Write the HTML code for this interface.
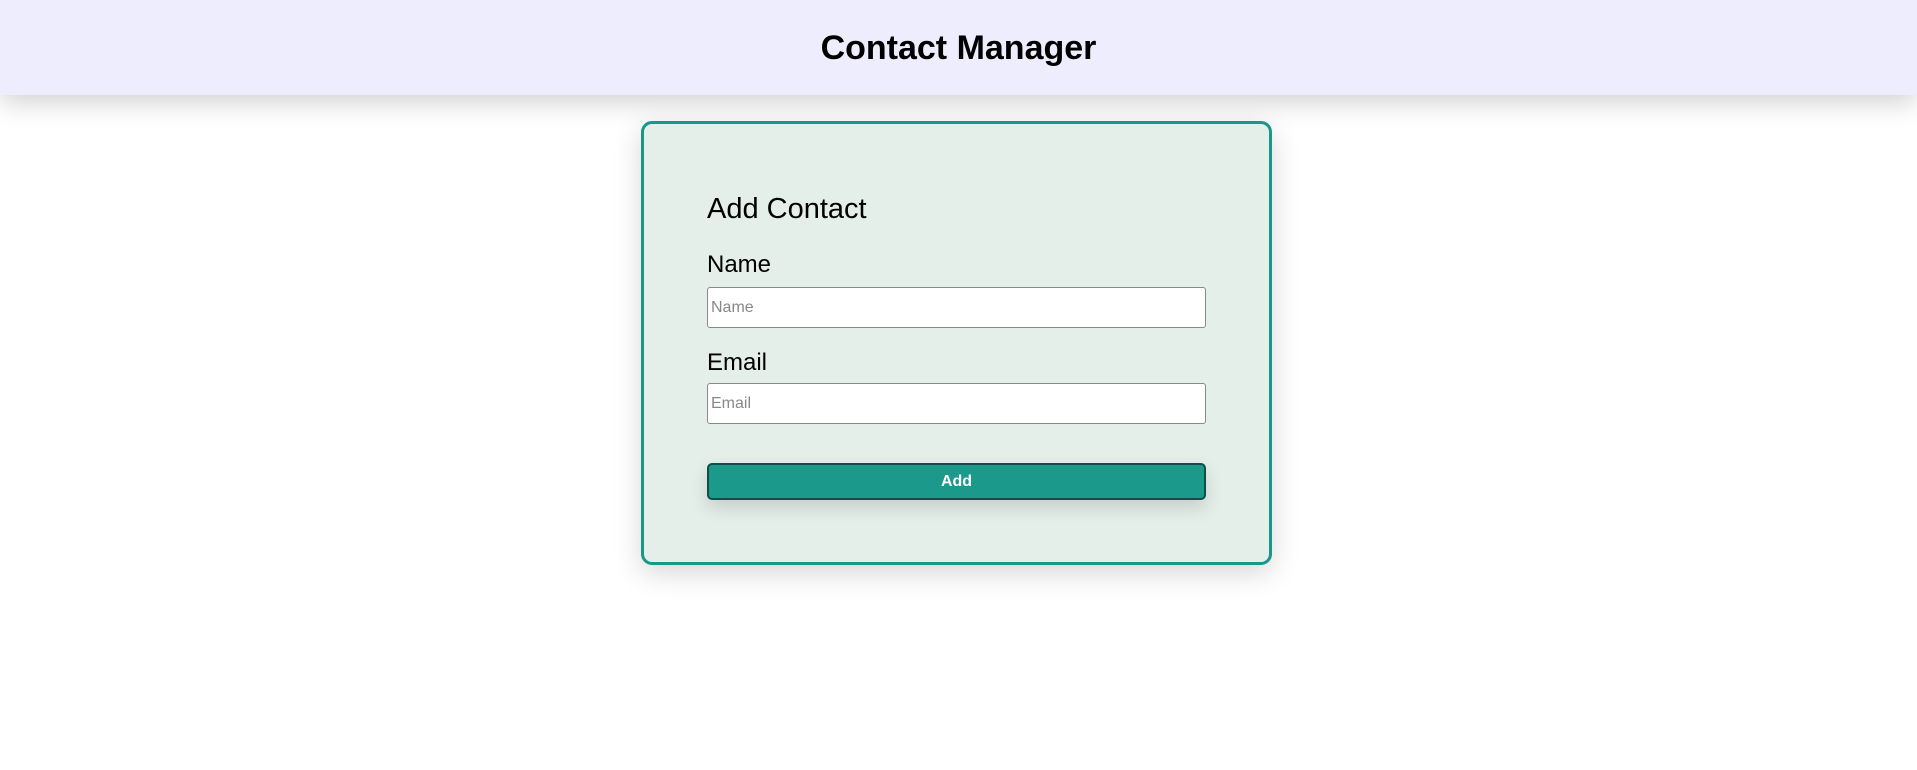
<!DOCTYPE html>
<html><head><meta charset="utf-8"><style>
html,body{margin:0;padding:0;width:1917px;height:770px;background:#fff;overflow:hidden;font-family:"Liberation Sans",sans-serif;}
.hdr{position:absolute;left:0;top:0;width:1917px;height:95px;background:#eeedfe;box-shadow:0 6px 26px rgba(0,0,0,0.2);}
.hdr h1{margin:0;position:absolute;left:0;right:0;top:28px;text-align:center;font-size:34px;font-weight:bold;color:#000;line-height:40px;}
.card{position:absolute;left:641px;top:121px;width:625px;height:438px;border:3px solid #1a968a;border-radius:11px;background:#e5efea;box-shadow:0 8px 28px rgba(0,0,0,0.16);}
.t{position:absolute;left:63px;font-size:29px;color:#000;line-height:34px;top:68px;}
.l{position:absolute;left:63px;font-size:24px;color:#000;line-height:28px;}
.in{position:absolute;left:63px;width:499px;height:41px;box-sizing:border-box;border:1px solid #888;border-radius:3px;background:#fff;font-size:16px;color:#888;padding-left:3px;line-height:39px;}
.btn{position:absolute;left:63px;top:339px;width:499px;height:37px;box-sizing:border-box;background:#1b9a8b;border:2px solid #0f4f48;border-radius:5px;color:#fff;font-weight:bold;font-size:16px;text-align:center;line-height:33px;box-shadow:0 8px 18px rgba(0,0,0,0.14);}
</style></head><body>
<div class="hdr"><h1>Contact Manager</h1></div>
<div class="card">
<div class="t">Add Contact</div>
<div class="l" style="top:127px">Name</div>
<div class="in" style="top:163px">Name</div>
<div class="l" style="top:225px">Email</div>
<div class="in" style="top:259px">Email</div>
<div class="btn">Add</div>
</div>
</body></html>
